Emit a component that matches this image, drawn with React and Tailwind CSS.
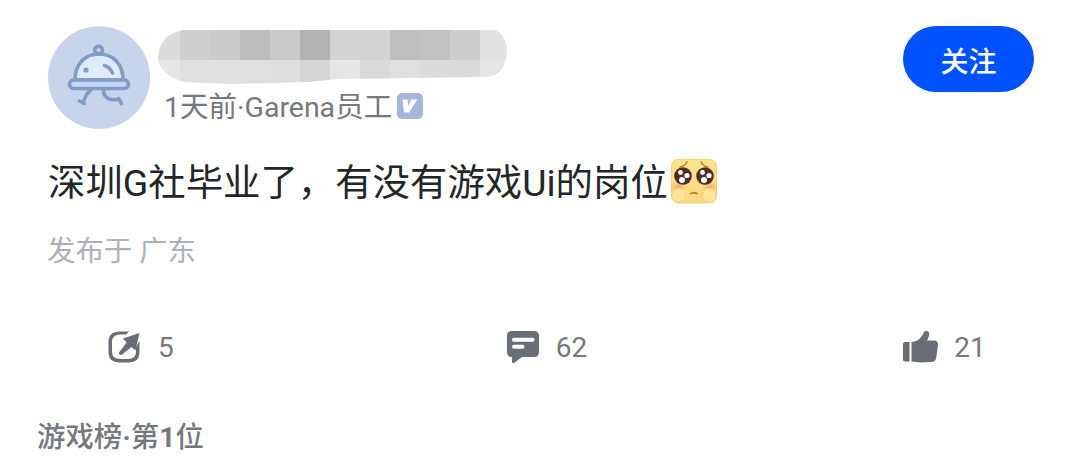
const TOP_ROW = ["#dcdcde", "#cfcfd1", "#cbcbcd", "#bdbdbf", "#cacacc", "#b3b3b5", "#d3d3d6", "#d3d3d6", "#bfbfc2", "#c2c2c4", "#cdcdd0", "#e2e2e4"];
const BOTTOM_ROW = ["#e6e6e8", "#e0e0e2", "#e0e0e2", "#dfdfe1", "#dedee0", "#d5d5d7", "#e6e6e8", "#d9d9db", "#dfdfe1", "#dcdcde", "#dadadd", "#e5e5e7"];

export default function App() {
  return (
    <div className="h-[463px] w-[1080px] overflow-hidden bg-white font-['Roboto','Noto_Sans_CJK_SC',sans-serif] text-[#75787c]">
      <header className="flex items-start pt-[26px] pr-[46px] pl-12">
        <Avatar />
        <div className="ml-2 pt-[3px]">
          <MaskedName />
          <div className="mt-[3px] ml-[6px] flex h-10 items-center text-[28.5px] leading-10">
            <span>1天前·Garena员工</span>
            <VerifiedBadge />
          </div>
        </div>
        <button className="ml-auto h-[66px] w-[131px] rounded-full bg-[#0052ff] pt-2 text-[28px] font-medium text-white">关注</button>
      </header>

      <main className="pl-12">
        <p className="mt-[25px] flex h-[58px] items-center text-[37.4px] whitespace-nowrap text-[#242527]">
          <span>深圳G社毕业了，有没有游戏Ui的岗位</span>
          <PleadingFace />
        </p>
        <p className="mt-[20px] -ml-px h-10 text-[28.4px] leading-10 text-[#adb0b5]">发布于 广东</p>
      </main>

      <div className="mt-[55px] flex h-10 items-center pl-[107px] text-[28px]">
        <Action icon={<ShareIcon />} count="5" />
        <div className="ml-[332px]">
          <Action icon={<CommentIcon />} count="62" />
        </div>
        <div className="ml-[316px]">
          <Action icon={<LikeIcon />} count="21" />
        </div>
      </div>

      <footer className="mt-[51px] pl-[37px] text-[28.4px] leading-10 font-medium">
        游戏榜<b>·</b>第<b>1</b>位
      </footer>
    </div>
  );
}

function Action({ icon, count }) {
  return (
    <button className="flex items-center gap-4">
      {icon}
      <span className="pt-[2px]">{count}</span>
    </button>
  );
}

function Avatar() {
  return (
    <svg className="h-[103px] w-[102px] shrink-0" viewBox="0 0 102 103" fill="none">
      <ellipse cx="51" cy="51.5" rx="51" ry="51.3" fill="#c7d4ea" />
      <g stroke="#819cc8" strokeWidth="3.6" strokeLinecap="round" strokeLinejoin="round">
        <path d="M27 54c0-16 10-26 24-26s24 10 24 26z" fill="#dfebfb" />
        <circle cx="50.5" cy="24" r="3.9" />
        <rect x="21.5" y="54" width="59" height="8.5" rx="4.2" fill="#c4d6f1" />
        <path d="M43 64c-5 3-6 8-8 13M31.500 75l5 2.500" />
        <path d="M55.500 64c0 7 5 11 15 9.500M70.500 72.500l3 5" />
        <path d="M56.500 39.500c4 1.500 6.500 4 8 7.500" />
      </g>
      <circle cx="38" cy="44" r="2.6" fill="#819cc8" />
    </svg>
  );
}

function MaskedName() {
  return (
    <svg className="h-14 w-[350px]" viewBox="0 0 350 56">
      <clipPath id="name-shape">
        <path d="M24 1H338Q349 8 349 22Q348 47 327 48L180 50L150 53L72 55L26 53Q0 45 0 28Q1 7 24 1z" />
      </clipPath>
      <g clipPath="url(#name-shape)" shapeRendering="crispEdges">
        {TOP_ROW.map((color, i) => (
          <rect key={i} x={i * 30 - 8} y="0" width="30" height="31" fill={color} />
        ))}
        {BOTTOM_ROW.map((color, i) => (
          <rect key={i} x={i * 30 - 8} y="31" width="30" height="26" fill={color} />
        ))}
      </g>
    </svg>
  );
}

function VerifiedBadge() {
  return (
    <svg className="mb-[5px] ml-[5px] size-[26px]" viewBox="0 0 26 26">
      <rect width="26" height="26" rx="5" fill="#a5b5dc" />
      <path d="M5.500 6.500h5l.6 6.500 3.300-6.500h6L12 19.500H7z" fill="#fff" />
    </svg>
  );
}

function PleadingFace() {
  return (
    <svg className="mb-[3px] ml-[3px] h-[45px] w-[46px]" viewBox="0 0 46 45">
      <defs>
        <linearGradient id="face" x1="0" y1="0" x2="0" y2="1">
          <stop stopColor="#fce58a" />
          <stop offset="1" stopColor="#fbd884" />
        </linearGradient>
        <radialGradient id="blush">
          <stop stopColor="#f79c78" stopOpacity="0.8" />
          <stop offset="1" stopColor="#f9a66b" stopOpacity="0" />
        </radialGradient>
      </defs>
      <rect x="0.500" y="0.500" width="45" height="43.500" rx="7" fill="url(#face)" stroke="#f5d170" />
      <ellipse cx="7" cy="28" rx="9" ry="6" fill="url(#blush)" />
      <ellipse cx="39" cy="28" rx="9" ry="6" fill="url(#blush)" />
      <path d="M9 8q5-1 7-5M30 3q2 4 7 5" fill="none" stroke="#bb7435" strokeWidth="1.500" strokeLinecap="round" />
      <g fill="#512d25">
        <circle cx="12" cy="17" r="8.800" />
        <circle cx="34" cy="17" r="8.800" />
      </g>
      <g fill="#fff">
        <circle cx="9.500" cy="13.500" r="2.400" />
        <circle cx="16" cy="16.500" r="2.600" />
        <circle cx="11" cy="21" r="3" />
        <circle cx="31.500" cy="13.500" r="2.400" />
        <circle cx="38" cy="16.500" r="2.600" />
        <circle cx="33" cy="21" r="3" />
      </g>
      <path d="M20 34.500q3-1.500 6 0" fill="none" stroke="#c9762f" strokeWidth="1.800" strokeLinecap="round" />
      <circle cx="7.500" cy="36.500" r="7" fill="#fde59b" stroke="#f8d27d" />
      <circle cx="38.500" cy="36.500" r="7" fill="#fde59b" stroke="#f8d27d" />
    </svg>
  );
}

function ShareIcon() {
  return (
    <svg className="h-9 w-[35px]" viewBox="0 0 35 36" fill="none">
      <path d="M22 2.500L19 5.500H13Q5 5.500 5 13V23Q5 30 13 30H21Q29 30 29 23V18L32.500 12V23Q32.500 33.500 21 33.500H13Q1.500 33.500 1.500 23V13Q1.500 2.500 13 2.500z" fill="#696e76" />
      <path d="M32.500 4L16 9.500l3.500 4L12 23.500q-.5 2.500 2.500 2.500L24.500 18l4 3.500z" fill="#696e76" />
    </svg>
  );
}

function CommentIcon() {
  return (
    <svg className="h-9 w-[34px]" viewBox="0 0 34 36">
      <path d="M6 2h22q5 0 5 5v16q0 5-5 5H16l-8 6q-2 1-2-2v-4q-5 0-5-5V7q0-5 5-5z" fill="#696e76" />
      <path d="M8 10.700h18.500M8 17.700h8.500" stroke="#fff" strokeWidth="4" strokeLinecap="round" />
    </svg>
  );
}

function LikeIcon() {
  return (
    <svg className="h-9 w-[35px]" viewBox="0 0 35 36" fill="#696e76">
      <path d="M2 13h4.500v19.500H2q-2 0-2-2V15q0-2 2-2z" />
      <path d="M8.500 13q7 0 11-7l1.500-3q2-2 4-.5 2 1.500 1 4.500l-2 4.500H31q4 0 4 4l-1.500 12q-.500 5.500-5.500 5.500l-10 .5-9.500-1z" />
    </svg>
  );
}
